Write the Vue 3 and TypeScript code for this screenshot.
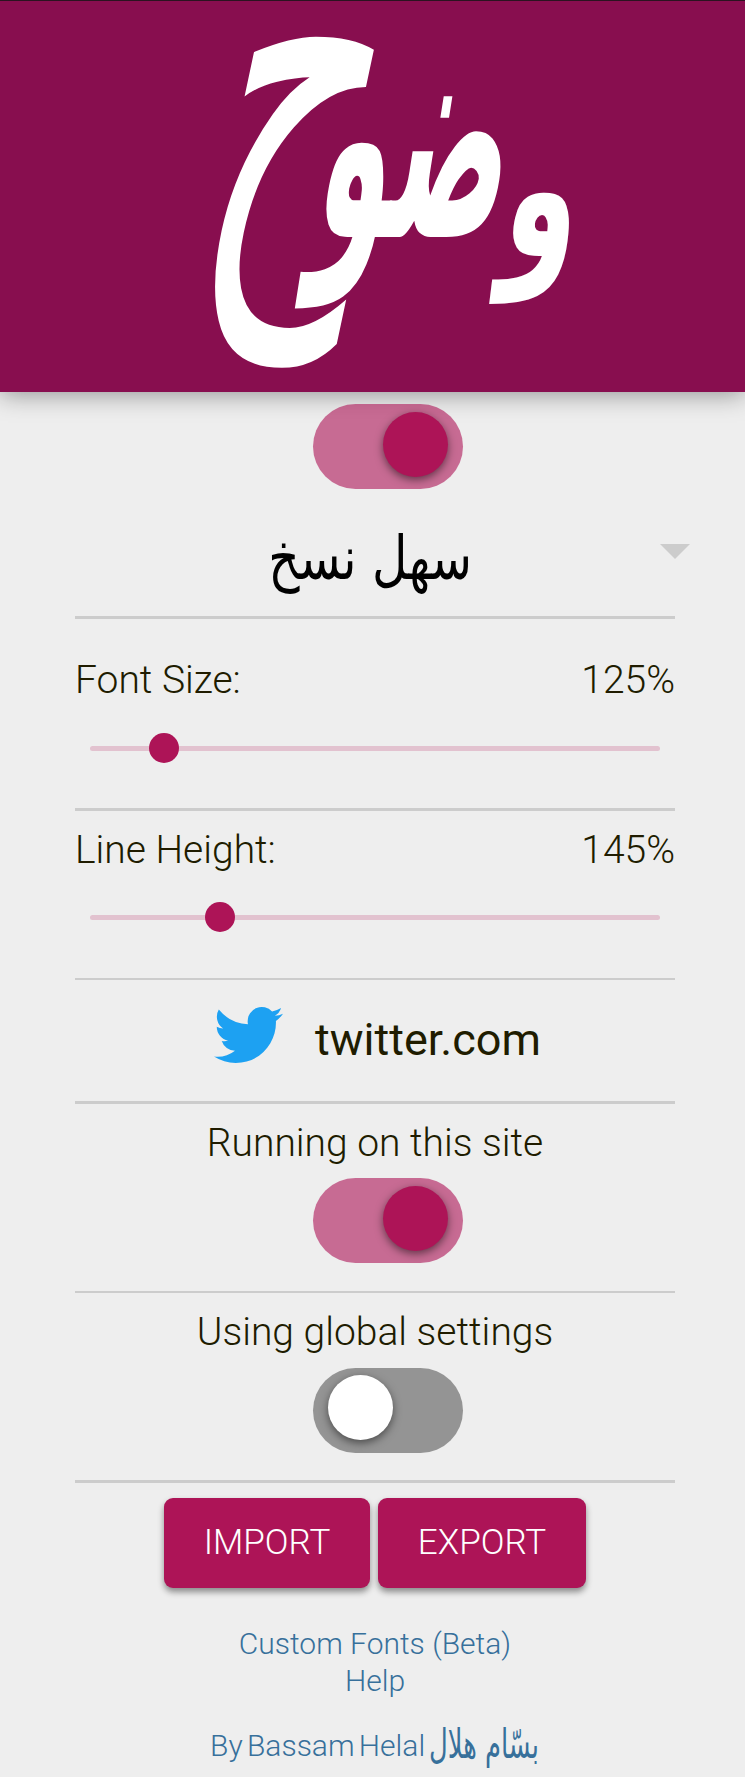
<script setup lang="ts">
import { ref } from 'vue'

interface Slider {
  label: string
  value: number
  position: number
}

const fontSize = ref<Slider>({ label: 'Font Size:', value: 125, position: 73.5 })
const lineHeight = ref<Slider>({ label: 'Line Height:', value: 145, position: 129.5 })
const enabled = ref(true)
const siteEnabled = ref(true)
const globalSettings = ref(false)
</script>

<template>
  <main class="popup">
    <header class="banner">
      <svg class="wordmark" viewBox="0 0 745 391" role="img" aria-label="وضوح">
        <text transform="translate(500 255) skewX(-7) scale(0.8 1.31)">و</text>
        <text transform="translate(311 236) skewX(-9) scale(0.79 1.95)">ضو</text>
        <text class="hah" transform="translate(193 246) skewX(-12) scale(1.7 3.3)">ح</text>
      </svg>
    </header>

    <section class="power">
      <button class="switch" :class="{ on: enabled }" @click="enabled = !enabled"><i class="knob"></i></button>
    </section>

    <section class="row font-select">
      <span class="font-name" lang="ar">سهل نسخ</span>
      <i class="caret"></i>
    </section>

    <section class="row size">
      <div class="setting"><span>{{ fontSize.label }}</span><span>{{ fontSize.value }}%</span></div>
      <div class="slider"><i class="thumb" :style="{ left: fontSize.position + 'px' }"></i></div>
    </section>

    <section class="row height">
      <div class="setting"><span>{{ lineHeight.label }}</span><span>{{ lineHeight.value }}%</span></div>
      <div class="slider"><i class="thumb" :style="{ left: lineHeight.position + 'px' }"></i></div>
    </section>

    <section class="row site">
      <svg class="bird" viewBox="0 0 24 19.5" preserveAspectRatio="none">
        <path d="M24 2.31a9.8 9.8 0 0 1-2.83.78A4.94 4.94 0 0 0 23.34.36a9.9 9.9 0 0 1-3.13 1.2A4.92 4.92 0 0 0 11.7 4.92c0 .39.04.76.13 1.12A13.98 13.98 0 0 1 1.67.9a4.93 4.93 0 0 0 1.52 6.57 4.9 4.9 0 0 1-2.23-.62v.06a4.93 4.93 0 0 0 3.95 4.83 5 5 0 0 1-2.22.08 4.93 4.93 0 0 0 4.6 3.42A9.9 9.9 0 0 1 0 17.28a13.94 13.94 0 0 0 7.55 2.21c9.05 0 14-7.5 14-13.99 0-.21 0-.42-.02-.63A10 10 0 0 0 24 2.31z" />
      </svg>
      <span class="domain">twitter.com</span>
    </section>

    <section class="row toggle-row">
      <p class="caption">Running on this site</p>
      <button class="switch" :class="{ on: siteEnabled }" @click="siteEnabled = !siteEnabled"><i class="knob"></i></button>
    </section>

    <section class="row toggle-row last">
      <p class="caption">Using global settings</p>
      <button class="switch" :class="{ on: globalSettings }" @click="globalSettings = !globalSettings"><i class="knob"></i></button>
    </section>

    <section class="actions">
      <button class="action import">IMPORT</button>
      <button class="action export">EXPORT</button>
    </section>

    <footer class="links">
      <a>Custom Fonts (Beta)</a>
      <a>Help</a>
      <a class="author"><span class="author-latin">By Bassam Helal</span><bdi class="author-ar" lang="ar">بسّام هلال</bdi></a>
    </footer>
  </main>
</template>

<style>
body {
  background: #eee;
}
</style>

<style scoped>
.popup {
  box-sizing: border-box;
  width: 745px;
  height: 1777px;
  overflow: hidden;
  background: #eee;
  color: #201c00;
  font-family: Roboto, "DejaVu Sans", sans-serif;
  font-weight: 300;
}
.banner {
  box-sizing: border-box;
  height: 392px;
  background: #880e4f;
  border-top: 1px solid #2b1320;
  box-shadow: 0 2px 24px rgba(0, 0, 0, 0.4);
}
.wordmark {
  display: block;
  overflow: visible;
  width: 745px;
  height: 391px;
  fill: #fff;
  font-family: "DejaVu Sans", sans-serif;
  font-weight: 700;
  font-size: 150px;
}
.hah {
  font-weight: 400;
}
.power {
  height: 97px;
  padding: 12px 0 0 313px;
  box-sizing: border-box;
}
.switch {
  display: flex;
  align-items: flex-start;
  box-sizing: border-box;
  width: 150px;
  height: 85px;
  padding: 7px 15px;
  border: 0;
  border-radius: 43px;
  background: #949494;
}
.knob {
  display: block;
  width: 65px;
  height: 65px;
  border-radius: 50%;
  background: #fff;
  box-shadow: 0 3px 8px rgba(0, 0, 0, 0.5);
}
.switch.on {
  padding: 8px 15px 7px 70px;
  background: rgba(173, 20, 87, 0.6);
}
.switch.on .knob {
  background: #ad1457;
}
.row {
  box-sizing: border-box;
  width: 600px;
  margin-left: 75px;
  border-bottom: 3px solid #ccc;
}
.font-select {
  height: 130px;
  display: flex;
  position: relative;
  justify-content: center;
}
.font-name {
  color: #000;
  font-family: "DejaVu Sans", sans-serif;
  font-weight: 400;
  font-size: 54px;
  line-height: 130px;
  transform: translate(-5px, 5px) scale(0.9, 1.12);
}
.caret {
  position: absolute;
  right: -15px;
  top: 55px;
  border: 15px solid transparent;
  border-top-color: #ccc;
  border-bottom: 0;
}
.size {
  height: 192px;
  padding-top: 38px;
}
.height {
  height: 169px;
  padding-top: 16px;
  border-bottom-width: 2px;
}
.setting {
  display: flex;
  justify-content: space-between;
  font-size: 39px;
  line-height: 46px;
}
.slider {
  position: relative;
  width: 570px;
  height: 5px;
  margin: 43px 15px 0;
  border-radius: 3px;
  background: #e2c2cf;
}
.height .slider {
  margin-top: 42px;
}
.thumb {
  position: absolute;
  top: -13px;
  width: 30px;
  height: 30px;
  margin-left: -15px;
  border-radius: 50%;
  background: #ad1457;
}
.site {
  display: flex;
  height: 124px;
  padding: 27px 0 0 139px;
}
.bird {
  width: 69px;
  height: 56px;
  fill: #1da1f2;
}
.domain {
  margin-left: 32px;
  padding-top: 6px;
  font-size: 45px;
  font-weight: 400;
  line-height: 54px;
}
.toggle-row {
  height: 189px;
  padding-top: 16px;
  border-bottom-width: 2px;
}
.toggle-row.last {
  height: 190px;
  border-bottom-width: 3px;
}
.caption {
  height: 46px;
  margin: 0 0 12px;
  font-size: 39px;
  line-height: 46px;
  text-align: center;
}
.last .caption {
  margin-bottom: 13px;
}
.toggle-row .switch {
  margin-left: 238px;
}
.actions {
  display: flex;
  gap: 8px;
  padding: 15px 0 0 164px;
}
.action {
  width: 206px;
  height: 90px;
  padding: 0;
  border: 0;
  border-radius: 9px;
  background: #ad1457;
  box-shadow: 0 4px 6px rgba(0, 0, 0, 0.42);
  color: #fff;
  font: 300 35px/90px Roboto, sans-serif;
}
.export {
  width: 208px;
}
.links {
  display: flex;
  flex-direction: column;
  align-items: center;
  margin-top: 37px;
  width: 750px;
  color: #37709b;
  font-size: 30px;
  line-height: 37px;
}
.author {
  display: flex;
  gap: 4px;
  margin-top: 28px;
  width: 330px;
}
.author-latin {
  flex: none;
  word-spacing: -3px;
}
.author-ar {
  flex: none;
  width: 109px;
  white-space: nowrap;
  direction: ltr;
  font-family: "DejaVu Sans", sans-serif;
  font-weight: 400;
  font-size: 30px;
  transform: scale(0.86, 1.35);
  transform-origin: 0 60%;
}
</style>
